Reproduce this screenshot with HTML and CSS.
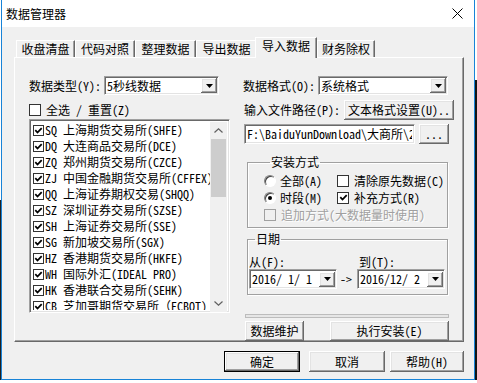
FILE: index.html
```html
<!DOCTYPE html>
<html lang="zh-CN">
<head>
<meta charset="utf-8">
<title>数据管理器</title>
<link rel="stylesheet" href="styles.css">
</head>
<body>
<div class="screen">
  <div class="desk-left"></div>
  <div class="window">
    <div class="titlebar">
      <span class="title">数据管理器</span>
      <svg class="close" width="11" height="11" viewBox="0 0 11 11"><path d="M0.5 0.5L10.5 10.5M10.5 0.5L0.5 10.5" stroke="#000" stroke-width="1" fill="none"/></svg>
    </div>
    <div class="client">
      <div class="tabs">
        <div class="tab t1">收盘清盘</div>
        <div class="tab t2">代码对照</div>
        <div class="tab t3">整理数据</div>
        <div class="tab t4">导出数据</div>
        <div class="tab active">导入数据</div>
        <div class="tab t6">财务除权</div>
      </div>
      <div class="panel">
        <div class="left">
          <div class="row row-type">
            <span class="lbl lbl-type">数据类型(Y):</span>
            <div class="combo sunken combo-type">
              <span class="val">5秒线数据</span>
              <span class="drop btn"><svg width="7" height="4" viewBox="0 0 7 4"><path d="M0 0h7L3.5 4z" fill="#000"/></svg></span>
            </div>
          </div>
          <div class="chk-row row-all">
            <span class="cb"></span><span class="txt">全选 / 重置(Z)</span>
          </div>
          <div class="list sunken">
            <div class="items">
              <div class="item"><span class="cb on"><svg viewBox="0 0 9 9"><path d="M1.3 4.2l2.2 2.3 4.2-4.4"/></svg></span>SQ 上海期货交易所(SHFE)</div>
              <div class="item"><span class="cb on"><svg viewBox="0 0 9 9"><path d="M1.3 4.2l2.2 2.3 4.2-4.4"/></svg></span>DQ 大连商品交易所(DCE)</div>
              <div class="item"><span class="cb on"><svg viewBox="0 0 9 9"><path d="M1.3 4.2l2.2 2.3 4.2-4.4"/></svg></span>ZQ 郑州期货交易所(CZCE)</div>
              <div class="item"><span class="cb on"><svg viewBox="0 0 9 9"><path d="M1.3 4.2l2.2 2.3 4.2-4.4"/></svg></span>ZJ 中国金融期货交易所(CFFEX)</div>
              <div class="item"><span class="cb on"><svg viewBox="0 0 9 9"><path d="M1.3 4.2l2.2 2.3 4.2-4.4"/></svg></span>QQ 上海证券期权交易(SHQQ)</div>
              <div class="item"><span class="cb on"><svg viewBox="0 0 9 9"><path d="M1.3 4.2l2.2 2.3 4.2-4.4"/></svg></span>SZ 深圳证券交易所(SZSE)</div>
              <div class="item"><span class="cb on"><svg viewBox="0 0 9 9"><path d="M1.3 4.2l2.2 2.3 4.2-4.4"/></svg></span>SH 上海证券交易所(SSE)</div>
              <div class="item"><span class="cb on"><svg viewBox="0 0 9 9"><path d="M1.3 4.2l2.2 2.3 4.2-4.4"/></svg></span>SG 新加坡交易所(SGX)</div>
              <div class="item"><span class="cb on"><svg viewBox="0 0 9 9"><path d="M1.3 4.2l2.2 2.3 4.2-4.4"/></svg></span>HZ 香港期货交易所(HKFE)</div>
              <div class="item"><span class="cb on"><svg viewBox="0 0 9 9"><path d="M1.3 4.2l2.2 2.3 4.2-4.4"/></svg></span>WH 国际外汇(IDEAL PRO)</div>
              <div class="item"><span class="cb on"><svg viewBox="0 0 9 9"><path d="M1.3 4.2l2.2 2.3 4.2-4.4"/></svg></span>HK 香港联合交易所(SEHK)</div>
              <div class="item"><span class="cb on"><svg viewBox="0 0 9 9"><path d="M1.3 4.2l2.2 2.3 4.2-4.4"/></svg></span>CB 芝加哥期货交易所（ECBOT)</div>
            </div>
            <div class="vscroll">
              <div class="sb-arrow"><svg width="9" height="5" viewBox="0 0 9 5"><path d="M0.5 4.5L4.5 0.8L8.5 4.5" stroke="#606060" stroke-width="1.2" fill="none"/></svg></div>
              <div class="sb-track"><div class="sb-thumb"></div></div>
              <div class="sb-arrow"><svg width="9" height="5" viewBox="0 0 9 5"><path d="M0.5 0.5L4.5 4.2L8.5 0.5" stroke="#606060" stroke-width="1.2" fill="none"/></svg></div>
            </div>
          </div>
        </div>

        <div class="right">
          <div class="row row-fmt">
            <span class="lbl lbl-fmt">数据格式(O):</span>
            <div class="combo sunken combo-fmt">
              <span class="val">系统格式</span>
              <span class="drop btn"><svg width="7" height="4" viewBox="0 0 7 4"><path d="M0 0h7L3.5 4z" fill="#000"/></svg></span>
            </div>
          </div>
          <div class="row row-path">
            <span class="lbl lbl-path">输入文件路径(P):</span>
            <div class="btn btn-textfmt">文本格式设置(U)..</div>
          </div>
          <div class="row row-input">
            <div class="input sunken"><span class="input-text">F:\BaiduYunDownload\大商所\2016\</span></div>
            <div class="btn btn-browse">...</div>
          </div>

          <fieldset class="group group-install">
            <legend>安装方式</legend>
            <div class="opts">
              <div class="opt"><span class="radio"></span><span>全部(A)</span></div>
              <div class="opt"><span class="cb"></span><span>清除原先数据(C)</span></div>
              <div class="opt"><span class="radio on"></span><span>时段(M)</span></div>
              <div class="opt"><span class="cb on"><svg viewBox="0 0 9 9"><path d="M1.3 4.2l2.2 2.3 4.2-4.4"/></svg></span><span>补充方式(R)</span></div>
              <div class="opt wide disabled"><span class="cb"></span><span>追加方式(大数据量时使用)</span></div>
            </div>
          </fieldset>

          <fieldset class="group group-date">
            <legend>日期</legend>
            <div class="dates">
              <span class="dlbl">从(F):</span>
              <span></span>
              <span class="dlbl dlbl-to">到(T):</span>
              <div class="combo sunken combo-date">
                <span class="val">2016/ 1/ 1</span>
                <span class="drop btn"><svg width="7" height="4" viewBox="0 0 7 4"><path d="M0 0h7L3.5 4z" fill="#000"/></svg></span>
              </div>
              <span class="arrow">-&gt;</span>
              <div class="combo sunken combo-date">
                <span class="val">2016/12/ 2</span>
                <span class="drop btn"><svg width="7" height="4" viewBox="0 0 7 4"><path d="M0 0h7L3.5 4z" fill="#000"/></svg></span>
              </div>
            </div>
          </fieldset>

          <div class="progress"></div>
          <div class="row row-actions">
            <div class="btn btn-maint">数据维护</div>
            <div class="btn btn-exec">执行安装(E)</div>
          </div>
        </div>
      </div>
      <div class="footer">
        <div class="btn default btn-ok">确定</div>
        <div class="btn btn-cancel">取消</div>
        <div class="btn btn-help">帮助(H)</div>
      </div>
    </div>
  </div>
  <div class="desk-right"></div>
</div>
</body>
</html>
```

FILE: styles.css
```css
* { box-sizing: border-box; margin: 0; padding: 0; }
html, body { width: 477px; height: 383px; overflow: hidden; }
body {
  background: #fff;
  color: #000;
  font-family: "Noto Sans Mono CJK SC", "Noto Sans CJK SC", "Liberation Mono", monospace;
  font-size: 12px;
  line-height: 14px;
}
.screen { display: flex; width: 477px; height: 383px; }
.desk-left { width: 1px; height: 380px; background: linear-gradient(#ffffff 0 200px, #202020 200px); }
.desk-right { width: 2px; height: 380px; background: linear-gradient(#ffffff 0 80px, #141414 80px); }
.window {
  width: 474px;
  height: 380px;
  border: 1px solid #1883d7;
  border-top: none;
  display: flex;
  flex-direction: column;
  background: #f0f0f0;
}
.titlebar {
  height: 27px;
  background: #fff;
  display: flex;
  align-items: center;
  justify-content: space-between;
  padding: 0 11px 0 4px;
  flex-shrink: 0;
}
.title { font-family: "Noto Sans CJK SC", "Noto Sans", sans-serif; font-size: 12px; line-height: 14px; }
.close { display: block; }

.client { display: flex; flex-direction: column; padding: 10px 0 0 12px; }

/* tabs */
.tabs { display: flex; align-items: flex-end; height: 20px; padding-left: 2px; }
.tab {
  height: 17px;
  border-top: 1px solid #fff;
  border-left: 1px solid #fff;
  border-right: 1px solid #696969;
  box-shadow: inset -1px 0 #a0a0a0;
  display: flex;
  align-items: center;
  justify-content: center;
  background: #f0f0f0;
  white-space: nowrap;
}
.t1 { width: 59px; }
.t2 { width: 60px; }
.t3 { width: 61px; }
.t4 { width: 61px; }
.t6 { width: 58px; }
.tab.active {
  position: relative;
  z-index: 1;
  width: 62px;
  height: 21px;
  margin-left: -2px;
  margin-bottom: -1px;
  padding-bottom: 4px;
}

/* panel */
.panel {
  width: 450px;
  height: 285px;
  border: 1px solid;
  border-color: #fff #696969 #696969 #fff;
  box-shadow: inset -1px -1px #a0a0a0;
  display: flex;
  padding: 18px 0 0 14px;
}
.left { width: 201px; margin-right: 13px; display: flex; flex-direction: column; }
.right { width: 211px; display: flex; flex-direction: column; }

.row { display: flex; align-items: center; }
.lbl { white-space: nowrap; }

/* bevels */
.sunken {
  border: 1px solid;
  border-color: #a0a0a0 #fff #fff #a0a0a0;
  box-shadow: inset 1px 1px #696969, inset -1px -1px #e3e3e3;
  background: #fff;
}
.btn {
  background: #f0f0f0;
  box-shadow: inset -1px -1px #696969, inset 1px 1px #fff, inset -2px -2px #a0a0a0, inset 2px 2px #e3e3e3;
  display: flex;
  align-items: center;
  justify-content: center;
  white-space: nowrap;
}
.btn.default { border: 1px solid #000; }

/* combo */
.combo { display: flex; align-items: center; justify-content: space-between; padding: 1px; overflow: hidden; }
.combo .val { padding-left: 1px; white-space: pre; }
.combo .drop { width: 16px; height: 15px; flex-shrink: 0; }
.combo .drop svg { display: block; }

.row-type { height: 19px; }
.lbl-type { width: 75px; }
.combo-type { width: 115px; height: 19px; }

/* checkboxes & radios */
.cb {
  width: 12px;
  height: 12px;
  border: 1px solid #333;
  background: #fff;
  display: flex;
  align-items: center;
  justify-content: center;
  flex-shrink: 0;
}
.cb svg { width: 9px; height: 9px; fill: none; stroke: #000; stroke-width: 1.8; display: block; }
.radio {
  width: 12px;
  height: 12px;
  border-radius: 50%;
  border: 1px solid;
  border-color: #808080 #fff #fff #808080;
  box-shadow: inset 1px 1px #404040;
  background: #fff;
  flex-shrink: 0;
  display: flex;
  align-items: center;
  justify-content: center;
}
.radio.on::after {
  content: "";
  width: 4px;
  height: 4px;
  border-radius: 50%;
  background: #000;
}

.chk-row { display: flex; align-items: center; }
.row-all { margin-top: 9px; height: 12px; }
.row-all .txt { margin-left: 5px; white-space: pre; }

/* list */
.list { margin-top: 3px; width: 201px; height: 194px; display: flex; padding: 2px; overflow: hidden; background: #fff; }
.items { flex: 1; overflow: hidden; }
.item { height: 16px; display: flex; align-items: center; padding-left: 1px; white-space: nowrap; }
.item .cb { width: 11px; height: 11px; margin-right: 1px; }
.vscroll { width: 17px; height: 190px; display: flex; flex-direction: column; background: #f0f0f0; flex-shrink: 0; }
.sb-arrow { height: 17px; display: flex; align-items: center; justify-content: center; flex-shrink: 0; }
.sb-track { flex: 1; padding: 0 1px; }
.sb-thumb { height: 58px; background: #cdcdcd; }

/* right column */
.row-fmt { height: 19px; }
.lbl-fmt { width: 75px; }
.combo-fmt { width: 130px; height: 19px; }

.row-path { margin-top: 5px; height: 20px; }
.lbl-path { width: 101px; padding-left: 1px; }
.btn-textfmt { width: 110px; height: 20px; }

.row-input { margin-top: 4px; height: 20px; }
.input {
  width: 171px;
  height: 20px;
  margin-left: 1px;
  padding: 2px 2px 0;
  overflow: hidden;
}
.input-text { display: block; width: 165px; overflow: hidden; white-space: nowrap; }
.btn-browse { width: 30px; height: 20px; margin-left: 4px; }

/* group boxes */
.group {
  width: 201px;
  margin-left: 4px;
  border: 1px solid #a0a0a0;
  box-shadow: inset 1px 1px #fff, 1px 1px #fff;
  padding: 0;
  min-width: 0;
}
.group legend { margin-left: 6px; padding: 0 1px; line-height: 14px; }
.group-install { margin-top: 11px; padding: 3px 0 4px 16px; }
.opts { display: grid; grid-template-columns: 73px 1fr; grid-auto-rows: 17px; }
.opt { display: flex; align-items: center; white-space: nowrap; }
.opt .radio + span { margin-left: 4px; }
.opt .cb + span { margin-left: 5px; }
.opt.wide { grid-column: 1 / 3; }
.opt.disabled { color: #a0a0a0; text-shadow: 1px 1px #fff; }
.opt.disabled .cb { border-color: #a0a0a0; background: #f0f0f0; }
.opt.disabled .cb + span { margin-left: 5px; }

.group-date { margin-top: 4px; padding: 8px 0 5px 1px; }
.dates { display: grid; grid-template-columns: 88px 20px 88px; grid-template-rows: 15px 20px; align-items: center; }
.dlbl { white-space: nowrap; }
.dlbl-to { padding-left: 2px; }
.combo-date { width: 88px; height: 20px; }
.combo-date .val { padding-left: 1px; }
.arrow { text-align: center; padding-right: 2px; }

.progress {
  margin-top: 19px;
  margin-left: 2px;
  width: 204px;
  height: 12px;
  border: 1px solid #bcbcbc;
  background: #e6e6e6;
}
.row-actions { margin-top: 3px; height: 20px; }
.btn-maint { width: 59px; height: 20px; margin-left: 2px; }
.btn-exec { width: 119px; height: 20px; margin-left: 26px; }

/* footer */
.footer { display: flex; justify-content: flex-end; margin-top: 9px; padding-right: 10px; }
.footer .btn { height: 21px; }
.btn-ok { width: 76px; }
.btn-cancel { width: 76px; margin-left: 9px; }
.btn-help { width: 74px; margin-left: 5px; }
```
